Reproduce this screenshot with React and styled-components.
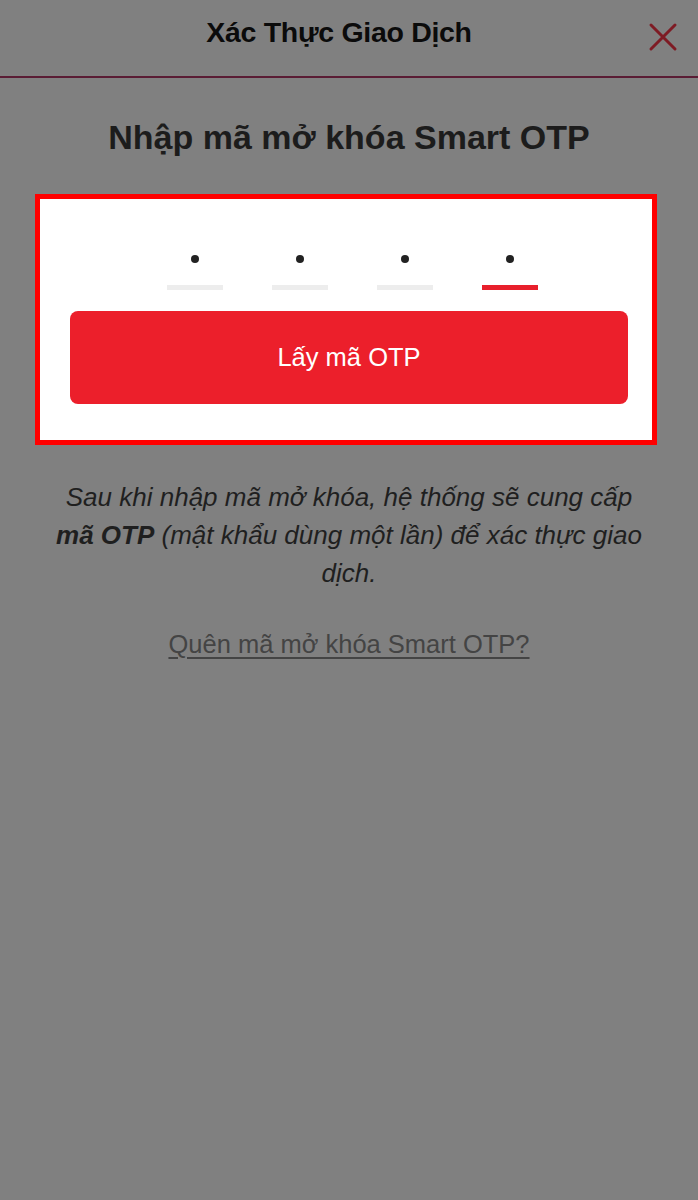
import React from 'react';
import styled, { createGlobalStyle } from 'styled-components';

const GlobalStyle = createGlobalStyle`
  html, body {
    margin: 0;
    padding: 0;
    background: #808080;
  }
  body {
    font-family: "Liberation Sans", Arial, sans-serif;
  }
`;

const Page = styled.div`
  width: 698px;
  min-height: 1200px;
  background: #808080;
`;

const Header = styled.header`
  height: 78px;
  box-sizing: border-box;
  padding-bottom: 12px;
  display: grid;
  grid-template-columns: 1fr auto 1fr;
  align-items: center;
  border-bottom: 2px solid #5a1c34;
`;

const HeaderTitle = styled.h2`
  grid-column: 2;
  margin: 0 20px 0 0;
  font-size: 28.5px;
  font-weight: 700;
  color: #0b0b0b;
  letter-spacing: -0.3px;
`;

const CloseButton = styled.button`
  grid-column: 3;
  justify-self: end;
  margin-right: 19px;
  margin-top: 10px;
  background: none;
  border: none;
  padding: 0;
  display: flex;
  cursor: pointer;
`;

const Content = styled.main`
  display: flex;
  flex-direction: column;
  align-items: center;
`;

const Title = styled.h1`
  margin: 40px 0 37px;
  font-size: 34px;
  font-weight: 700;
  color: #1c1c1c;
`;

const Card = styled.section`
  align-self: flex-start;
  margin-left: 35px;
  width: 622px;
  box-sizing: border-box;
  border: 5px solid #ff0000;
  background: #ffffff;
  padding: 56px 24px 36px 30px;
  display: flex;
  flex-direction: column;
`;

const PinRow = styled.div`
  display: flex;
  justify-content: center;
  gap: 49px;
  margin-left: 6px;
`;

const PinSlot = styled.div`
  width: 56px;
  display: flex;
  flex-direction: column;
  align-items: center;
`;

const Dot = styled.span`
  width: 8px;
  height: 8px;
  border-radius: 50%;
  background: #222;
`;

const Underline = styled.span`
  margin-top: 22px;
  width: 100%;
  height: 5px;
  background: ${p => (p.$active ? '#e8202c' : '#ededed')};
`;

const SubmitButton = styled.button`
  margin-top: 21px;
  height: 93px;
  width: 558px;
  border: none;
  border-radius: 8px;
  background: #ec1f2b;
  color: #ffffff;
  font-family: inherit;
  font-size: 25.5px;
  cursor: pointer;
`;

const Note = styled.p`
  margin: 33px 0 0;
  width: 590px;
  text-align: center;
  font-size: 26px;
  line-height: 38px;
  font-style: italic;
  color: #1f1f1f;

  strong {
    font-weight: 700;
  }
`;

const ForgotLink = styled.a`
  margin-top: 38px;
  font-size: 25.5px;
  color: #444;
  text-decoration: underline;
  text-underline-offset: 4px;
  cursor: pointer;
`;

const App = () => {
    const pins = [0, 1, 2, 3];
    return (
        <>
            <GlobalStyle />
            <Page>
                <Header>
                    <HeaderTitle>Xác Thực Giao Dịch</HeaderTitle>
                    <CloseButton aria-label="Đóng">
                        <svg width="32" height="32" viewBox="0 0 32 32">
                            <path d="M4 4 L28 28 M28 4 L4 28" stroke="#7e1b24" strokeWidth="3" strokeLinecap="round" />
                        </svg>
                    </CloseButton>
                </Header>
                <Content>
                    <Title>Nhập mã mở khóa Smart OTP</Title>
                    <Card>
                        <PinRow>
                            {pins.map(i => (
                                <PinSlot key={i}>
                                    <Dot />
                                    <Underline $active={i === pins.length - 1} />
                                </PinSlot>
                            ))}
                        </PinRow>
                        <SubmitButton>Lấy mã OTP</SubmitButton>
                    </Card>
                    <Note>
                        Sau khi nhập mã mở khóa, hệ thống sẽ cung cấp <strong>mã OTP</strong> (mật khẩu dùng một lần) để xác thực giao dịch.
                    </Note>
                    <ForgotLink>Quên mã mở khóa Smart OTP?</ForgotLink>
                </Content>
            </Page>
        </>
    );
};

export default App;
